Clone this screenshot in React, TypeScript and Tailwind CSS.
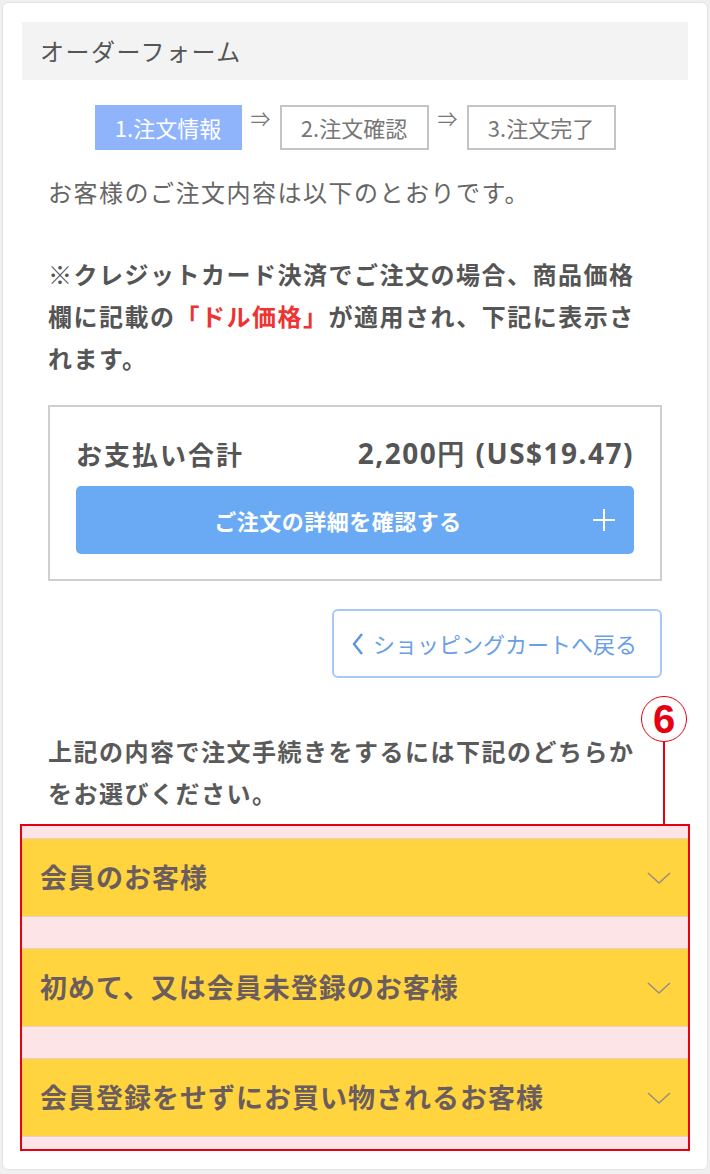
const jp = "font-['Noto_Sans_CJK_JP','Noto_Sans',sans-serif]";

function Chevron() {
  return (
    <svg width="26" height="14" viewBox="0 0 26 14" fill="none" className="shrink-0">
      <path d="M2 2 L13 12 L24 2" stroke="#9a8f80" strokeWidth="1.6" />
    </svg>
  );
}

function Step({ label, active }: { label: string; active?: boolean }) {
  return (
    <div
      className={
        active
          ? "flex h-[45px] w-[147px] items-center justify-center bg-[#8fb4fb] text-[22px] text-white"
          : "flex h-[45px] w-[149px] items-center justify-center border-2 border-[#c4c4c4] bg-white text-[22px] text-[#777]"
      }
    >
      {label}
    </div>
  );
}

function Arrow() {
  return <div className="w-[38px] pt-[4px] text-center text-[20px] leading-none text-[#777]">⇒</div>;
}

const rows = ["会員のお客様", "初めて、又は会員未登録のお客様", "会員登録をせずにお買い物されるお客様"];

export default function App() {
  return (
    <div className={`min-h-screen bg-[#f0f0f0] p-[2px] ${jp}`}>
      <div className="h-[1168px] rounded-[6px] border border-[#e3e3e3] bg-white px-[19px] pt-[19px]">
        <div className="flex h-[58px] items-center bg-[#f3f3f3] px-[18px] text-[24px] tracking-[1.5px] text-[#555]">
          オーダーフォーム
        </div>

        <div className="mt-[25px] flex items-start justify-center">
          <Step label="1.注文情報" active />
          <Arrow />
          <Step label="2.注文確認" />
          <Arrow />
          <Step label="3.注文完了" />
        </div>

        <div className="mx-[26px]">
          <p className="mt-[24px] text-[24px] leading-[36px] tracking-[1.5px] text-[#666]">
            お客様のご注文内容は以下のとおりです。
          </p>
          <p className="mt-[43px] pr-[12px] text-[24px] font-bold leading-[42px] tracking-[1.5px] text-[#555]">
            ※クレジットカード決済でご注文の場合、商品価格欄に記載の
            <span className="text-[#ee3333]">「ドル価格」</span>
            が適用され、下記に表示されます。
          </p>

          <div className="mt-[26px] border-2 border-[#cfcfcf] px-[26px] pb-[25px] pt-[26px]">
            <div className="flex h-[40px] items-center justify-between text-[26px] font-bold text-[#555]">
              <span className="tracking-[2px]">お支払い合計</span>
              <span className="font-['Noto_Sans',sans-serif] text-[28px] tracking-[1.5px]">2,200円 (US$19.47)</span>
            </div>
            <button className="relative mt-[13px] flex h-[68px] w-full items-center justify-center rounded-[5px] bg-[#6aaaf4] pr-[34px] text-[22px] font-bold tracking-[0.5px] text-white">
              ご注文の詳細を確認する
              <span className="absolute right-[18px] top-1/2 -translate-y-1/2">
                <svg width="24" height="24" viewBox="0 0 24 24">
                  <path d="M12 1 V23 M1 12 H23" stroke="white" strokeWidth="2" />
                </svg>
              </span>
            </button>
          </div>

          <div className="mt-[28px] flex justify-end">
            <button className="flex h-[69px] w-[330px] items-center justify-center gap-[8px] rounded-[6px] border-2 border-[#a8c9f7] pr-[6px] text-[22px] text-[#6a9fe6]">
              <svg width="14" height="24" viewBox="0 0 14 24" fill="none">
                <path d="M11 2 L3 12 L11 22" stroke="#5d93e0" strokeWidth="2.4" />
              </svg>
              ショッピングカートへ戻る
            </button>
          </div>

          <p className="mt-[52px] pr-[12px] text-[24px] font-bold leading-[42px] tracking-[1.5px] text-[#5a5a5a]">
            上記の内容で注文手続きをするには下記のどちらかをお選びください。
          </p>
        </div>

        <div className="relative -mx-[2px] mt-[10px] flex flex-col gap-[31px] border-2 border-[#e60012] bg-[#fde4e6] py-[12px]">
          <div className="absolute left-[619px] top-[-130px] flex flex-col items-center">
            <div className="flex h-[46px] w-[46px] items-center justify-center rounded-full border-[1.5px] border-[#e60012] bg-white text-[40px] font-bold leading-none text-[#e60012] font-['Liberation_Sans',sans-serif]">
              6
            </div>
            <div className="h-[84px] w-[2px] bg-[#e60012]" />
          </div>
          {rows.map((r) => (
            <div
              key={r}
              className="flex h-[79px] items-center justify-between border-y border-[#e8cfcf] bg-[#ffd43f] pl-[18px] pr-[16px]"
            >
              <span className="text-[27px] font-bold tracking-[1px] text-[#6b5d5d]">{r}</span>
              <Chevron />
            </div>
          ))}
        </div>
      </div>
    </div>
  );
}
